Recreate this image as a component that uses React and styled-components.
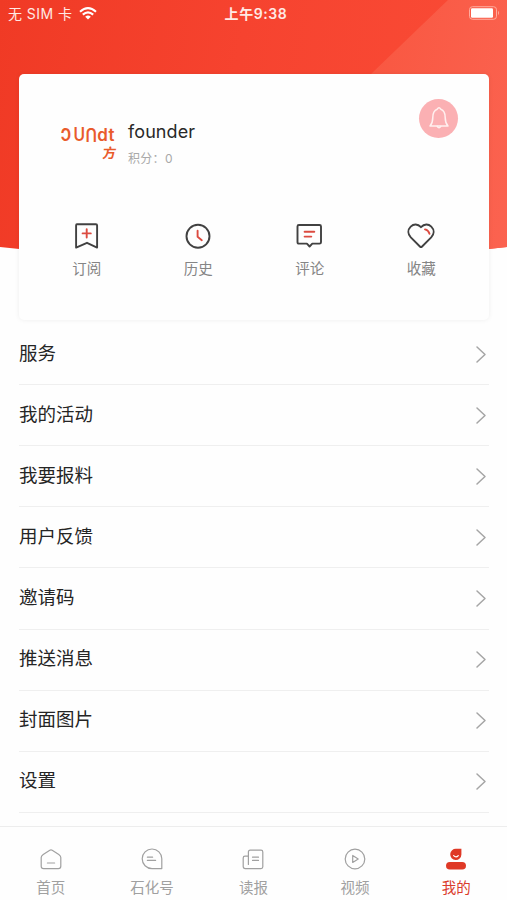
import React, { useState } from "react";
import styled, { createGlobalStyle } from "styled-components";

const GlobalStyle = createGlobalStyle`
  * {
    box-sizing: border-box;
  }

  body {
    margin: 0;
    background: #fefefe;
    font-family: Inter, "Noto Sans CJK SC", sans-serif;
  }

  button {
    border: 0;
    padding: 0;
    background: none;
    font: inherit;
    color: inherit;
    cursor: pointer;
  }

  svg {
    display: block;
    overflow: visible;
  }
`;

const Screen = styled.div`
  width: 507px;
  height: 900px;
  display: flex;
  flex-direction: column;
  overflow: hidden;
  background: #fefefe;
`;

const Hero = styled.header`
  position: relative;
  padding: 0 18px 0 19px;

  &::before {
    content: "";
    position: absolute;
    inset: 0 0 auto 0;
    height: 262px;
    background: linear-gradient(100deg, #f03a25 0%, #f6432f 45%, #f94a35 85%);
    clip-path: path("M0 0H507V247Q253 276 0 247Z");
  }

  &::after {
    content: "";
    position: absolute;
    inset: 0 0 auto 0;
    height: 262px;
    background: linear-gradient(100deg, #f95842 70%, #fb6350 100%);
    clip-path: path("M448 0L371 74V262H489V249L507 247V0Z");
  }
`;

const StatusBar = styled.div`
  position: relative;
  z-index: 1;
  height: 73.5px;
  margin: 0 -11px;
  padding-top: 3px;
  display: grid;
  grid-template-columns: 1fr auto 1fr;
  align-items: start;
  line-height: 21px;
  font-size: 14px;
  color: #ffe9e4;
`;

const Carrier = styled.div`
  display: flex;
  align-items: center;
  gap: 7px;
  letter-spacing: 0.45px;
  white-space: nowrap;
`;

const Clock = styled.div`
  padding-left: 4px;
  font-weight: 600;
  letter-spacing: 0.6px;
`;

const Battery = styled.div`
  justify-self: end;
  padding: 3px 0 0 0;
`;

const Card = styled.section`
  position: relative;
  z-index: 1;
  height: 246.5px;
  border-radius: 5px;
  background: #fefefe;
  box-shadow: 0 0 5px rgba(0, 0, 0, 0.07);
`;

const Profile = styled.div`
  height: 138px;
  padding: 25px 31px 0 42px;
  display: flex;
`;

const Logo = styled.svg`
  margin-top: 24px;
  width: 56px;
  height: 40px;
  font-family: Inter, "Noto Sans CJK SC", sans-serif;
  font-weight: 600;
  fill: #e95b2b;
`;

const User = styled.div`
  flex: 1;
  padding: 21.5px 0 0 11px;
`;

const UserName = styled.div`
  font-size: 18px;
  line-height: 24px;
  letter-spacing: 0.1px;
  color: #292929;
`;

const Points = styled.div`
  margin-top: 5px;
  font-size: 12px;
  line-height: 20px;
  letter-spacing: 0.3px;
  color: #a9a9a9;
`;

const BellButton = styled.button`
  width: 39px;
  height: 39px;
  border-radius: 50%;
  display: grid;
  place-items: center;
  background: #fbb0b3;
`;

const Shortcuts = styled.div`
  padding: 10.5px 12px 0;
  display: grid;
  grid-template-columns: repeat(4, 1fr);
`;

const Shortcut = styled.button`
  display: flex;
  flex-direction: column;
  align-items: center;
  gap: 8px;
  font-size: 14.5px;
  line-height: 22px;
  color: #858585;
`;

const Menu = styled.ul`
  flex: 1;
  margin: 0;
  padding: 4px 18px 0 19px;
  list-style: none;
`;

const MenuItem = styled.li`
  height: 61.12px;
  padding: 0 3.5px 0 0;
  display: flex;
  align-items: center;
  justify-content: space-between;
  border-bottom: 1px solid #efefef;
  font-size: 18.5px;
  color: #252525;
`;

const MenuLabel = styled.span`
  padding-bottom: 5px;
`;

const TabBar = styled.nav`
  height: 74px;
  padding-top: 20.5px;
  display: grid;
  grid-template-columns: repeat(5, 1fr);
  border-top: 1.5px solid #ededed;
  background: #fefefe;
`;

const Tab = styled.button`
  display: flex;
  flex-direction: column;
  align-items: center;
  justify-content: flex-start;
  gap: 7.5px;
  font-size: 14.5px;
  line-height: 22px;
  color: ${(props) => (props.$active ? "#da3b2c" : "#a0a0a0")};
`;

const LineIcon = styled.svg`
  fill: none;
  stroke: ${(props) => props.$color || "currentColor"};
  stroke-width: ${(props) => props.$weight || 1.2};
  stroke-linecap: round;
  stroke-linejoin: round;

  .accent {
    stroke: #dc4b40;
  }
`;

const WifiIcon = () => (
  <svg width="18" height="13" viewBox="0 0 18 13" fill="none" stroke="#fff" strokeWidth="2.1">
    <path d="M1 4.8Q9-2.4 17 4.8" />
    <path d="M3.8 7.6Q9 3 14.2 7.6" />
    <path d="M6.2 9.7Q9 7.3 11.8 9.7L9 12.5Z" fill="#fff" stroke="none" />
  </svg>
);

const BatteryIcon = () => (
  <svg width="31" height="14" viewBox="0 0 31 14">
    <rect x="0.5" y="0.7" width="27" height="12.6" rx="3" fill="none" stroke="#ffab9d" />
    <rect x="2" y="2.3" width="22" height="9.4" rx="1.2" fill="#fff" />
    <path d="M29 4.8Q31 7 29 9.2Z" fill="#ffab9d" />
  </svg>
);

const BellIcon = () => (
  <LineIcon width="22" height="24" viewBox="0 0 22 24" $color="#fff0ef" $weight={1.5}>
    <path d="M9.2 3.2Q11 .4 12.8 3.2C16.4 4.5 17.2 7.7 17.2 11.5C17.2 15.5 18 17.8 20 20H2C4 17.8 4.8 15.5 4.8 11.5C4.8 7.7 5.6 4.5 9.2 3.2Z" />
    <path d="M9.2 20.3Q11 23 12.8 20.3" />
  </LineIcon>
);

const Chevron = () => (
  <LineIcon width="10" height="17" viewBox="0 0 10 17" $color="#a5a5a5" $weight={1.5}>
    <path d="M1 1L9 8.5L1 16" />
  </LineIcon>
);

const shortcuts = [
  {
    label: "订阅",
    icon: (
      <>
        <path d="M3.9 2.2H22.9Q24.1 2.2 24.1 3.4V25.6L14 20.8L3.1 25.6V3.4Q3.1 2.2 3.9 2.2Z" />
        <path className="accent" d="M9.6 11.4H17.8M13.7 7.3V15.5" />
      </>
    ),
  },
  {
    label: "历史",
    icon: (
      <>
        <circle cx="14" cy="14.3" r="11.5" />
        <path className="accent" d="M13.6 8.8V14.8L17.8 18.2" />
      </>
    ),
  },
  {
    label: "评论",
    icon: (
      <>
        <path d="M2.9 3H23.5Q25 3 25 4.5V20.2Q25 21.6 23.5 21.6H16.3L13.6 24.5L10.9 21.6H2.9Q1.5 21.6 1.5 20.2V4.5Q1.5 3 2.9 3Z" />
        <path className="accent" d="M8.6 9.7H18.3M8.6 14.6H15.3" />
      </>
    ),
  },
  {
    label: "收藏",
    icon: (
      <>
        <path d="M14 5.2C10.7 1.6 6.6 1.8 3.7 4.6C.5 7.8.7 12 3.8 15.4L12.9 24.5Q14 25.6 15.1 24.5L24.2 15.4C27.3 12 27.5 7.8 24.3 4.6C21.4 1.8 17.3 1.6 14 5.2Z" />
        <path className="accent" d="M18 7.4Q21.5 8 22.5 11.8" />
      </>
    ),
  },
];

const menu = [
  "服务",
  "我的活动",
  "我要报料",
  "用户反馈",
  "邀请码",
  "推送消息",
  "封面图片",
  "设置",
];

const tabs = [
  {
    label: "首页",
    icon: (
      <>
        <path d="M3.2 6.4L9.8 2.3Q11 1.6 12.2 2.3L18.8 6.4Q20.8 7.7 20.8 9.5V18.2Q20.8 20.6 18.4 20.6H3.6Q1.2 20.6 1.2 18.2V9.5Q1.2 7.7 3.2 6.4Z" />
        <path d="M7.4 15H14.6" />
      </>
    ),
  },
  {
    label: "石化号",
    icon: (
      <>
        <path d="M11 1A9.8 9.8 0 1 0 11 20.6H20.8V10.8A9.8 9.8 0 0 0 11 1Z" />
        <path d="M6.4 9.2H11.6M6.4 12.4H14.6" />
      </>
    ),
  },
  {
    label: "读报",
    icon: (
      <>
        <path d="M6.4 16.4V4Q6.4 2.2 8.2 2.2H19Q20.8 2.2 20.8 4V18.8Q20.8 20.6 19 20.6H3.2Q1.2 20.6 1.2 18.6V10Q1.2 8.2 3 8.2H6.4" />
        <path d="M10.5 9.2H16.5M10.5 12.4H16.5" />
      </>
    ),
  },
  {
    label: "视频",
    icon: (
      <>
        <circle cx="11" cy="11" r="9.8" />
        <path d="M8.7 7.5V14.5L14.2 11Z" />
      </>
    ),
  },
  {
    label: "我的",
    icon: (
      <g stroke="none" fill="#df3926">
        <path d="M11.2 .8H16.4V6.5A5.6 5.6 0 1 1 11.2 .8Z" />
        <rect x="1" y="14" width="20" height="7.6" rx="3.8" />
        <path d="M8.6 7.6Q11 10.2 13.3 7.6" fill="none" stroke="#fff" strokeWidth="1.2" />
      </g>
    ),
  },
];

const App = () => {
  const [active, setActive] = useState("我的");

  return (
    <React.Fragment>
      <GlobalStyle />
      <Screen>
        <Hero>
          <StatusBar>
            <Carrier>
              <span>无 SIM 卡</span>
              <WifiIcon />
            </Carrier>
            <Clock>上午9:38</Clock>
            <Battery>
              <BatteryIcon />
            </Battery>
          </StatusBar>
          <Card>
            <Profile>
              <Logo viewBox="0 0 56 40">
                <text transform="translate(-0.5 17.6) scale(0.85 1)" fontSize="23" fontWeight="500">ɔ</text>
                <text transform="translate(12.4 17.6) scale(0.87 1)" fontSize="18">U</text>
                {/* the n of the wordmark is the U turned round */}
                <text transform="translate(36 4.5) rotate(180) scale(0.87 1)" fontSize="18">U</text>
                <text x="36.3" y="17.6" fontSize="17">d</text>
                <text x="47.6" y="17.6" fontSize="17">t</text>
                <text transform="translate(41 35) skewX(-8)" fontSize="13.5">方</text>
              </Logo>
              <User>
                <UserName>founder</UserName>
                <Points>积分：0</Points>
              </User>
              <BellButton>
                <BellIcon />
              </BellButton>
            </Profile>
            <Shortcuts>
              {shortcuts.map((item) => (
                <Shortcut key={item.label}>
                  <LineIcon width="28" height="28" viewBox="0 0 28 28" $color="#414141" $weight={1.9}>
                    {item.icon}
                  </LineIcon>
                  {item.label}
                </Shortcut>
              ))}
            </Shortcuts>
          </Card>
        </Hero>
        <Menu>
          {menu.map((name) => (
            <MenuItem key={name}>
              <MenuLabel>{name}</MenuLabel>
              <Chevron />
            </MenuItem>
          ))}
        </Menu>
        <TabBar>
          {tabs.map((tab) => (
            <Tab
              key={tab.label}
              $active={active === tab.label}
              onClick={() => setActive(tab.label)}
            >
              <LineIcon width="22" height="22" viewBox="0 0 22 22">
                {tab.icon}
              </LineIcon>
              {tab.label}
            </Tab>
          ))}
        </TabBar>
      </Screen>
    </React.Fragment>
  );
};

export default App;
